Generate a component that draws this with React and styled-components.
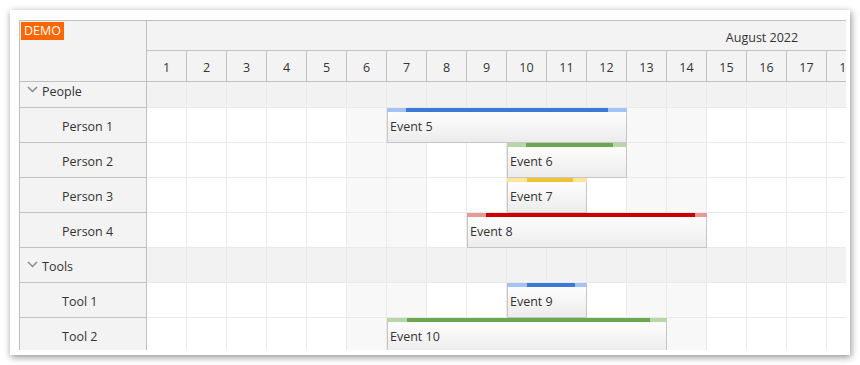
import styled, { createGlobalStyle } from "styled-components";

const CELL = 40;
const DAYS = Array.from({ length: 31 }, (_, i) => i + 1);
const WEEKEND = [6, 7, 13, 14, 20, 21, 27, 28];

const palette = {
  blue: { dark: "#3c78d8", light: "#a4c2f4" },
  green: { dark: "#6aa84f", light: "#b6d7a8" },
  yellow: { dark: "#f1c232", light: "#ffe599" },
  red: { dark: "#cc0000", light: "#ea9999" },
};

const rows = [
  { id: "people", name: "People", group: true },
  { id: "p1", name: "Person 1" },
  { id: "p2", name: "Person 2" },
  { id: "p3", name: "Person 3" },
  { id: "p4", name: "Person 4" },
  { id: "tools", name: "Tools", group: true },
  { id: "t1", name: "Tool 1" },
  { id: "t2", name: "Tool 2" },
];

// bar = [left inset, right inset] of the dark part, px
const events = [
  { id: 5, text: "Event 5", row: "p1", start: 7, end: 12, color: "blue", bar: [19, 19] },
  { id: 6, text: "Event 6", row: "p2", start: 10, end: 12, color: "green", bar: [19, 14] },
  { id: 7, text: "Event 7", row: "p3", start: 10, end: 11, color: "yellow", bar: [20, 14] },
  { id: 8, text: "Event 8", row: "p4", start: 9, end: 14, color: "red", bar: [19, 12] },
  { id: 9, text: "Event 9", row: "t1", start: 10, end: 11, color: "blue", bar: [20, 12] },
  { id: 10, text: "Event 10", row: "t2", start: 7, end: 13, color: "green", bar: [20, 17] },
];

const GlobalStyle = createGlobalStyle`
  body {
    margin: 0;
    background: #fff;
    font-family: "Open Sans", "Noto Sans", sans-serif;
    font-size: 12.5px;
    color: #333;
  }
`;

const Frame = styled.div`
  margin: 10px;
  width: 840px;
  height: 345px;
  box-sizing: border-box;
  padding: 10px 4px 5px 9px;
  background: #fff;
  box-shadow: 1px 2px 7px rgba(0, 0, 0, 0.45);
  overflow: hidden;
`;

const Scheduler = styled.div`
  height: 100%;
  display: flex;
  flex-direction: column;
  border-top: 1px solid #c0c0c0;
  border-left: 1px solid #c0c0c0;
  overflow: hidden;
  box-sizing: border-box;
`;

const Header = styled.div`
  display: flex;
  flex-shrink: 0;
`;

const Corner = styled.div`
  position: relative;
  width: 127px;
  height: 61px;
  box-sizing: border-box;
  flex-shrink: 0;
  background: #f3f3f3;
  border-right: 1px solid #c0c0c0;
  border-bottom: 1px solid #c0c0c0;
`;

const Demo = styled.div`
  position: absolute;
  top: 1px;
  left: 1px;
  height: 18px;
  line-height: 18px;
  padding: 0 3px;
  background: #ff6600;
  color: #fff;
`;

const TimeHeader = styled.div`
  display: flex;
  flex-direction: column;
  flex-shrink: 0;
  background: #f3f3f3;
`;

const MonthCell = styled.div`
  width: ${DAYS.length * CELL}px;
  height: 30px;
  box-sizing: border-box;
  padding: 4px 10px 0 0;
  line-height: 25px;
  text-align: center;
  border-bottom: 1px solid #c0c0c0;
`;

const DayRow = styled.div`
  display: flex;
`;

const DayCell = styled.div`
  width: ${CELL}px;
  height: 31px;
  box-sizing: border-box;
  flex-shrink: 0;
  padding-top: 3px;
  line-height: 27px;
  text-align: center;
  border-right: 1px solid #c0c0c0;
  border-bottom: 1px solid #c0c0c0;
`;

const Body = styled.div`
  flex: 1;
  overflow: hidden;
`;

const BodyInner = styled.div`
  margin-top: ${(p) => -p.$scroll}px;
`;

const Row = styled.div`
  display: flex;
  height: 35px;
`;

const RowHeader = styled.div`
  width: 127px;
  flex-shrink: 0;
  box-sizing: border-box;
  display: flex;
  align-items: center;
  gap: 4px;
  padding: 2px 0 0 ${(p) => (p.$group ? 7 : 42)}px;
  background: #f3f3f3;
  border-right: 1px solid #c0c0c0;
  border-bottom: 1px solid #c0c0c0;
`;

const Chevron = styled.svg`
  width: 11px;
  height: 7px;
  margin-top: -3px;
  flex-shrink: 0;
`;

const Cells = styled.div`
  position: relative;
  display: flex;
  flex-shrink: 0;
`;

const Cell = styled.div`
  width: ${CELL}px;
  height: 35px;
  box-sizing: border-box;
  flex-shrink: 0;
  background: ${(p) => (p.$group ? "#f2f2f2" : p.$weekend ? "#f8f8f8" : "#fff")};
  border-right: 1px solid #eaeaea;
  border-bottom: 1px solid #eaeaea;
`;

const Event = styled.div`
  position: absolute;
  top: 0;
  height: 35px;
  box-sizing: border-box;
  padding: 2px 0 0 2px;
  display: flex;
  align-items: center;
  border: 1px solid #c6c6c6;
  background: linear-gradient(to bottom, #ffffff 0%, #ececec 100%);
  white-space: nowrap;
`;

const Bar = styled.div`
  position: absolute;
  top: -1px;
  left: -1px;
  right: -1px;
  height: 4px;
  background: ${(p) => p.$light};
`;

const BarFill = styled.div`
  position: absolute;
  top: 0;
  bottom: 0;
  background: ${(p) => p.$dark};
`;

const ChevronIcon = () => (
  <Chevron viewBox="0 0 11 7">
    <polyline points="1,1 5.5,5.5 10,1" fill="none" stroke="#8a8a8a" strokeWidth="1.5" />
  </Chevron>
);

export default function App() {
  return (
    <>
      <GlobalStyle />
      <Frame>
        <Scheduler>
          <Header>
            <Corner>
              <Demo>DEMO</Demo>
            </Corner>
            <TimeHeader>
              <MonthCell>August 2022</MonthCell>
              <DayRow>
                {DAYS.map((d) => (
                  <DayCell key={d}>{d}</DayCell>
                ))}
              </DayRow>
            </TimeHeader>
          </Header>
          <Body>
            <BodyInner $scroll={9}>
              {rows.map((r) => (
                <Row key={r.id}>
                  <RowHeader $group={r.group}>
                    {r.group && <ChevronIcon />}
                    <span>{r.name}</span>
                  </RowHeader>
                  <Cells>
                    {DAYS.map((d) => (
                      <Cell key={d} $group={r.group} $weekend={WEEKEND.includes(d)} />
                    ))}
                    {events
                      .filter((e) => e.row === r.id)
                      .map((e) => {
                        const c = palette[e.color];
                        return (
                          <Event
                            key={e.id}
                            style={{
                              left: (e.start - 1) * CELL,
                              width: (e.end - e.start + 1) * CELL,
                            }}
                          >
                            <Bar $light={c.light}>
                              <BarFill $dark={c.dark} style={{ left: e.bar[0], right: e.bar[1] }} />
                            </Bar>
                            {e.text}
                          </Event>
                        );
                      })}
                  </Cells>
                </Row>
              ))}
            </BodyInner>
          </Body>
        </Scheduler>
      </Frame>
    </>
  );
}
